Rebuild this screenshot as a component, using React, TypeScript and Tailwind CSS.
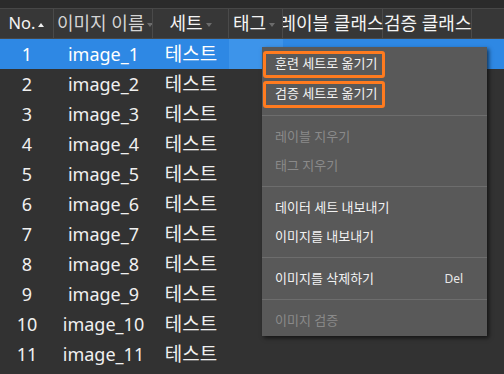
const font = "font-['Noto_Sans','Noto_Sans_CJK_KR',sans-serif]";

const rows = Array.from({ length: 11 }, (_, i) => i + 1);

function Arrow({ up }: { up?: boolean }) {
  return (
    <svg width="6" height="4" viewBox="0 0 6 4" className="ml-[3px] mt-[2px] shrink-0">
      {up ? <path d="M0 4 L3 0 L6 4 Z" fill="#f0f0f0" /> : <path d="M0 0 L3 4 L6 0 Z" fill="#6c6c6c" />}
    </svg>
  );
}

function Header() {
  return (
    <div className="flex h-[31px] bg-[#373737] border-y border-[#474747] text-[18px] text-[#f4f4f4]">
      <div className="w-[54px] flex items-center justify-center border-r border-[#4a4a4a] shrink-0 text-[16.5px]">
        No.<Arrow up />
      </div>
      <div className="w-[99px] flex items-center border-r border-[#4a4a4a] shrink-0 overflow-hidden whitespace-nowrap pl-[3px] text-[#d4d4d4]">
        이미지 이름<Arrow />
      </div>
      <div className="w-[76px] flex items-center justify-center border-r border-[#4a4a4a] shrink-0">
        세트<Arrow />
      </div>
      <div className="w-[54px] flex items-center justify-start pl-[4px] border-r border-[#4a4a4a] shrink-0 whitespace-nowrap overflow-hidden">
        태그<Arrow />
      </div>
      <div className="w-[100px] flex items-center justify-center border-r border-[#4a4a4a] shrink-0 whitespace-nowrap [clip-path:inset(0_-20px_0_0)]">
        <span className="-ml-[2px]">레이블 클래스</span>
      </div>
      <div className="w-[89px] flex items-center justify-start pl-[1px] border-r border-[#4a4a4a] shrink-0 whitespace-nowrap">
        검증 클래스
      </div>
      <div className="flex-1" />
    </div>
  );
}

function Row({ n }: { n: number }) {
  const sel = n === 1;
  return (
    <div className={`flex h-[30px] text-[18px] ${sel ? 'bg-[#2e88e4] text-white' : 'text-[#f0f0f0]'}`}>
      <div className="w-[54px] flex items-center justify-center shrink-0">{n}</div>
      <div className="w-[99px] flex items-center justify-center shrink-0">image_{n}</div>
      <div className="w-[76px] flex items-center justify-center shrink-0 text-[19px]">테스트</div>
      <div className={`w-[54px] shrink-0 ${sel ? 'bg-[#3d94ea]' : ''}`} />
      <div className="flex-1" />
    </div>
  );
}

function Item({ label, disabled, boxed, shortcut }: { label: string; disabled?: boolean; boxed?: boolean; shortcut?: string }) {
  if (boxed) {
    return (
      <div className="h-[30px] flex items-center pl-[1px]">
        <div className="h-[27px] w-[122px] border-[3px] border-[#ff7b1f] rounded-[3px] flex items-center pl-[9px] text-[#f2f2f2]">
          {label}
        </div>
      </div>
    );
  }
  return (
    <div className={`h-[29px] flex items-center pl-[13px] pr-[24px] ${disabled ? 'text-[#8a8a8a]' : 'text-[#f2f2f2]'}`}>
      <span className="flex-1">{label}</span>
      {shortcut && <span className="text-[12px] text-[#e8e8e8]">{shortcut}</span>}
    </div>
  );
}

function Sep() {
  return <div className="h-px bg-[#6d6d6d] my-[6px]" />;
}

function ContextMenu() {
  return (
    <div className="absolute left-[262px] top-[47px] w-[225px] bg-[#595959] pt-[2px] pb-[1px] text-[13px] shadow-[2px_2px_4px_rgba(0,0,0,0.6)]">
      <Item label="훈련 세트로 옮기기" boxed />
      <Item label="검증 세트로 옮기기" boxed />
      <Sep />
      <Item label="레이블 지우기" disabled />
      <Item label="태그 지우기" disabled />
      <Sep />
      <Item label="데이터 세트 내보내기" />
      <Item label="이미지를 내보내기" />
      <Sep />
      <Item label="이미지를 삭제하기" shortcut="Del" />
      <Sep />
      <Item label="이미지 검증" disabled />
    </div>
  );
}

export default function App() {
  return (
    <div className={`relative w-[504px] h-[374px] overflow-hidden bg-[#323232] ${font}`}>
      <div className="h-[8px] bg-[#2b2b2b]" />
      <Header />
      {rows.map((n) => (
        <Row key={n} n={n} />
      ))}
      <ContextMenu />
    </div>
  );
}
